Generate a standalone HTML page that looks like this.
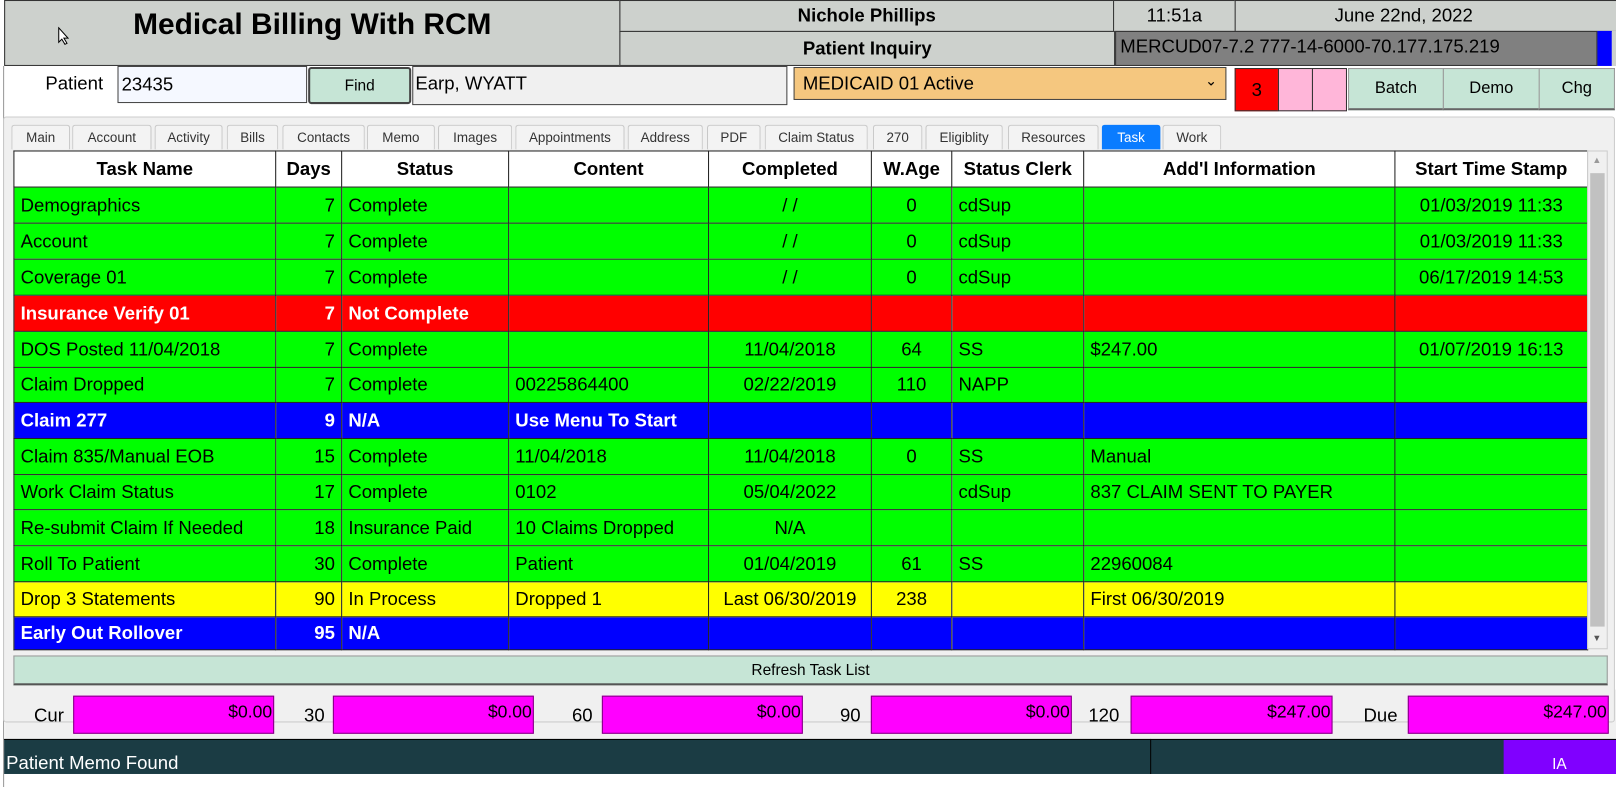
<!DOCTYPE html>
<html><head><meta charset="utf-8"><style>
*{box-sizing:border-box;margin:0;padding:0}
body{width:1616px;height:777px;background:#fff;font-family:"Liberation Sans",Arial,sans-serif;position:relative;overflow:hidden}
#w{position:absolute;left:0;top:0;width:1568px;height:754px;transform:scale(1.0306);transform-origin:0 0}
.a{position:absolute}
.hdr{background:#cdd1cd;border:1px solid #333}
.c{display:flex;align-items:center;justify-content:center}
table{border-collapse:collapse;table-layout:fixed;position:absolute;left:13px;top:146px;width:1527px}
td,th{border:1px solid #222;font-size:18px;padding:0 6px;white-space:nowrap;overflow:hidden}
th{background:#fff;font-weight:bold;text-align:center}
.g td{background:#00ff00;color:#000}
.r td{background:#ff0000;color:#fff;font-weight:bold}
.b td{background:#0000ff;color:#fff;font-weight:bold}
.y td{background:#ffff00;color:#000}
.n{text-align:right}.m{text-align:center}
.tab{position:absolute;top:121px;height:24px;border:1px solid #c8c8c8;border-bottom:none;background:#f3f3f3;font-size:13px;color:#333;display:flex;align-items:center;justify-content:center;border-radius:3px 3px 0 0}
.tot{position:absolute;top:675px;height:37px;background:#ff00ff;border:1px solid #800080;font-size:17px;text-align:right;padding:5px 1px 0 0}
.lb{position:absolute;top:684px;font-size:18px}
</style></head><body><div id="w">
<div class="a hdr c" style="left:4px;top:0;width:598px;height:64px;padding-bottom:16px;font-size:29px;font-weight:bold">Medical Billing With RCM</div>
<svg class="a" style="left:56px;top:26px" width="12" height="18"><path d="M1 1 L1 15 L4 12 L7 17 L9 16 L6 11 L10 11 Z" fill="#fff" stroke="#000"/></svg>
<div class="a hdr c" style="left:601px;top:0;width:480px;height:31px;font-size:18px;font-weight:bold">Nichole Phillips</div>
<div class="a hdr c" style="left:601px;top:30px;width:481px;height:34px;font-size:18px;font-weight:bold">Patient Inquiry</div>
<div class="a hdr c" style="left:1080px;top:0;width:119px;height:31px;font-size:18px">11:51a</div>
<div class="a hdr c" style="left:1198px;top:0;width:418px;height:31px;font-size:18px;padding-right:90px">June 22nd, 2022</div>
<div class="a" style="left:1082px;top:30px;width:468px;height:34px;background:#808080;border:1px solid #333;font-size:18px;padding:4px 0 0 4px">MERCUD07-7.2 777-14-6000-70.177.175.219</div>
<div class="a" style="left:1550px;top:30px;width:14px;height:34px;background:#0000ff"></div>
<div class="a" style="left:1564px;top:30px;width:52px;height:34px;background:#cdd1cd"></div>
<div class="a" style="left:0;top:64px;width:4px;height:700px;border-right:1px solid #999"></div>
<div class="a" style="left:5px;top:669px;width:1563px;height:48px;background:#f0f0f0"></div>
<div class="a" style="left:44px;top:71px;font-size:18px">Patient</div>
<div class="a" style="left:114px;top:64px;width:184px;height:36px;background:#f5f8ff;border:1px solid #444;font-size:18px;padding:7px 3px">23435</div>
<div class="a c" style="left:299px;top:65px;width:100px;height:36px;background:#c6e5d6;border:2px solid #444;border-radius:3px;font-size:15px">Find</div>
<div class="a" style="left:400px;top:64px;width:364px;height:38px;background:#f0f0f0;border:1px solid #444;font-size:18px;padding:6px 2px">Earp, WYATT</div>
<div class="a" style="left:770px;top:65px;width:420px;height:32px;background:#f5c77f;border:1px solid #444;font-size:18px;padding:5px 8px">MEDICAID 01 Active<span style="position:absolute;right:8px;top:4px;font-size:14px">&#8964;</span></div>
<div class="a c" style="left:1198px;top:66px;width:43px;height:42px;background:#ff0000;border:1px solid #333;font-size:18px">3</div>
<div class="a" style="left:1240px;top:66px;width:34px;height:42px;background:#ffb6d9;border:1px solid #333"></div>
<div class="a" style="left:1273px;top:66px;width:34px;height:42px;background:#ffb6d9;border:1px solid #333"></div>
<div class="a c" style="left:1308px;top:66px;width:93px;height:41px;background:#c6e5d6;border:1px solid #999;border-bottom:2px solid #666;font-size:16px">Batch</div>
<div class="a c" style="left:1400px;top:66px;width:94px;height:41px;background:#c6e5d6;border:1px solid #999;border-bottom:2px solid #666;font-size:16px">Demo</div>
<div class="a c" style="left:1493px;top:66px;width:74px;height:41px;background:#c6e5d6;border:1px solid #999;border-bottom:2px solid #666;font-size:16px">Chg</div>
<div class="a" style="left:3px;top:113px;width:1564px;height:588px;background:#f0f0f0;border:1px solid #ccc;border-radius:3px"></div>
<div class="tab" style="left:11px;width:57px">Main</div>
<div class="tab" style="left:70px;width:77px">Account</div>
<div class="tab" style="left:150px;width:66px">Activity</div>
<div class="tab" style="left:220px;width:50px">Bills</div>
<div class="tab" style="left:274px;width:80px">Contacts</div>
<div class="tab" style="left:356px;width:66px">Memo</div>
<div class="tab" style="left:425px;width:72px">Images</div>
<div class="tab" style="left:500px;width:106px">Appointments</div>
<div class="tab" style="left:609px;width:73px">Address</div>
<div class="tab" style="left:686px;width:52px">PDF</div>
<div class="tab" style="left:742px;width:100px">Claim Status</div>
<div class="tab" style="left:847px;width:48px">270</div>
<div class="tab" style="left:898px;width:75px">Eligiblity</div>
<div class="tab" style="left:978px;width:88px">Resources</div>
<div class="tab" style="left:1069px;width:57px;background:#0a7cff;color:#fff;border-color:#0a7cff">Task</div>
<div class="tab" style="left:1128px;width:57px">Work</div>
<table>
<colgroup><col style="width:254px"><col style="width:64px"><col style="width:162px"><col style="width:194px"><col style="width:158px"><col style="width:78px"><col style="width:128px"><col style="width:302px"><col style="width:187px"></colgroup>
<tr style="height:35px"><th>Task Name</th><th>Days</th><th>Status</th><th>Content</th><th>Completed</th><th>W.Age</th><th>Status Clerk</th><th>Add'l Information</th><th>Start Time Stamp</th></tr>
<tr class="g" style="height:35px"><td>Demographics</td><td class="n">7</td><td>Complete</td><td></td><td class="m">/ /</td><td class="m">0</td><td>cdSup</td><td></td><td class="m">01/03/2019 11:33</td></tr>
<tr class="g" style="height:35px"><td>Account</td><td class="n">7</td><td>Complete</td><td></td><td class="m">/ /</td><td class="m">0</td><td>cdSup</td><td></td><td class="m">01/03/2019 11:33</td></tr>
<tr class="g" style="height:35px"><td>Coverage 01</td><td class="n">7</td><td>Complete</td><td></td><td class="m">/ /</td><td class="m">0</td><td>cdSup</td><td></td><td class="m">06/17/2019 14:53</td></tr>
<tr class="r" style="height:35px"><td>Insurance Verify 01</td><td class="n">7</td><td>Not Complete</td><td></td><td></td><td></td><td></td><td></td><td></td></tr>
<tr class="g" style="height:35px"><td>DOS Posted 11/04/2018</td><td class="n">7</td><td>Complete</td><td></td><td class="m">11/04/2018</td><td class="m">64</td><td>SS</td><td>$247.00</td><td class="m">01/07/2019 16:13</td></tr>
<tr class="g" style="height:34px"><td>Claim Dropped</td><td class="n">7</td><td>Complete</td><td>00225864400</td><td class="m">02/22/2019</td><td class="m">110</td><td>NAPP</td><td></td><td></td></tr>
<tr class="b" style="height:35px"><td>Claim 277</td><td class="n">9</td><td>N/A</td><td>Use Menu To Start</td><td></td><td></td><td></td><td></td><td></td></tr>
<tr class="g" style="height:35px"><td>Claim 835/Manual EOB</td><td class="n">15</td><td>Complete</td><td>11/04/2018</td><td class="m">11/04/2018</td><td class="m">0</td><td>SS</td><td>Manual</td><td></td></tr>
<tr class="g" style="height:34px"><td>Work Claim Status</td><td class="n">17</td><td>Complete</td><td>0102</td><td class="m">05/04/2022</td><td></td><td>cdSup</td><td>837 CLAIM SENT TO PAYER</td><td></td></tr>
<tr class="g" style="height:35px"><td>Re-submit Claim If Needed</td><td class="n">18</td><td>Insurance Paid</td><td>10 Claims Dropped</td><td class="m">N/A</td><td></td><td></td><td></td><td></td></tr>
<tr class="g" style="height:35px"><td>Roll To Patient</td><td class="n">30</td><td>Complete</td><td>Patient</td><td class="m">01/04/2019</td><td class="m">61</td><td>SS</td><td>22960084</td><td></td></tr>
<tr class="y" style="height:34px"><td>Drop 3 Statements</td><td class="n">90</td><td>In Process</td><td>Dropped 1</td><td class="m">Last 06/30/2019</td><td class="m">238</td><td></td><td>First 06/30/2019</td><td></td></tr>
<tr class="b" style="height:32px"><td>Early Out Rollover</td><td class="n">95</td><td>N/A</td><td></td><td></td><td></td><td></td><td></td><td></td></tr>
</table>
<div class="a" style="left:1540px;top:146px;width:20px;height:484px;background:#f0f0f0;border:1px solid #ccc"></div>
<div class="a" style="left:1543px;top:168px;width:14px;height:440px;background:#c1c1c1"></div>
<div class="a" style="left:1545px;top:150px;font-size:9px;color:#999">&#9650;</div>
<div class="a" style="left:1545px;top:614px;font-size:9px;color:#555">&#9660;</div>
<div class="a c" style="left:13px;top:636px;width:1547px;height:29px;background:#c6e5d6;border:1px solid #999;border-bottom:2px solid #555;font-size:15px">Refresh Task List</div>
<div class="lb" style="left:33px">Cur</div>
<div class="tot" style="left:71px;width:195px">$0.00</div>
<div class="lb" style="left:295px">30</div>
<div class="tot" style="left:323px;width:195px">$0.00</div>
<div class="lb" style="left:555px">60</div>
<div class="tot" style="left:584px;width:195px">$0.00</div>
<div class="lb" style="left:815px">90</div>
<div class="tot" style="left:845px;width:195px">$0.00</div>
<div class="lb" style="left:1056px">120</div>
<div class="tot" style="left:1097px;width:196px">$247.00</div>
<div class="lb" style="left:1323px">Due</div>
<div class="tot" style="left:1366px;width:195px">$247.00</div>
<div class="a" style="left:4px;top:717px;width:1612px;height:34px;background:#1b3c44;border-top:1px solid #000"></div>
<div class="a" style="left:1116px;top:717px;width:1px;height:34px;background:#000"></div>
<div class="a" style="left:1459px;top:718px;width:157px;height:33px;background:#8000ff"></div>
<div class="a" style="left:6px;top:730px;color:#fff;font-size:18px">Patient Memo Found</div>
<div class="a" style="left:1506px;top:733px;color:#fff;font-size:15px">IA</div>
</div></body></html>
